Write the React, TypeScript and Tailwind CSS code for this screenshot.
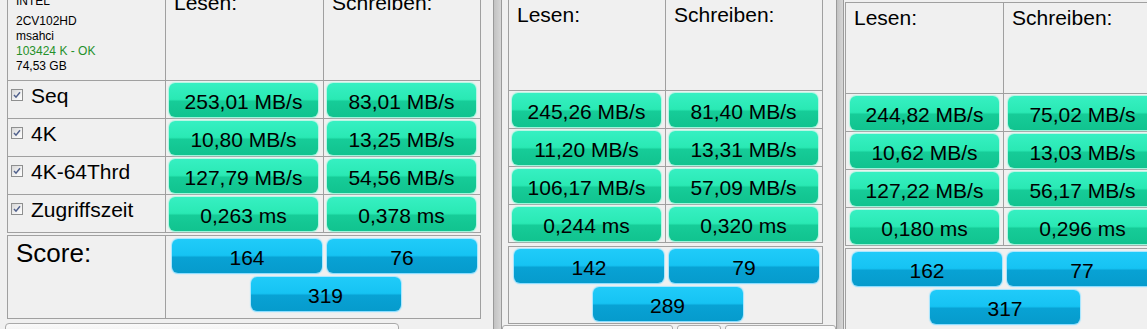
import React from "react";

type PanelDef = {
  reads: string[];
  writes: string[];
  scores: [string, string, string];
};

const LABELS = ["Seq", "4K", "4K-64Thrd", "Zugriffszeit"];

function Check() {
  return (
    <span className="mt-[8px] ml-[3px] w-[12px] h-[12px] shrink-0 border border-[#8e8f8f] bg-[linear-gradient(135deg,#d6d6d6_0%,#f2f2f2_60%,#fdfdfd_100%)] flex items-center justify-center">
      <svg width="8" height="8" viewBox="0 0 8 8">
        <path d="M1 4 L3 6.2 L7 1.2" stroke="#51618c" strokeWidth="1.5" fill="none" />
      </svg>
    </span>
  );
}

function Green({ v, ml }: { v: string; ml: string }) {
  return (
    <div
      className={`${ml} w-[149px] h-[34px] shrink-0 rounded-[6px] bg-[linear-gradient(to_bottom,#36f0c2_0%,#2ae9b4_48%,#16cc98_54%,#11c38f_100%)] shadow-[0_1px_1px_#9cf4da,0_0_1px_1px_#b4f7e4] flex items-center justify-center pt-[4px] text-[21px] leading-[24px] text-black`}
    >
      {v}
    </div>
  );
}

function Blue({ v }: { v: string }) {
  return (
    <div className="w-[150px] h-[34px] shrink-0 rounded-[6px] bg-[linear-gradient(to_bottom,#20cbf9_0%,#16c3f3_48%,#08a2d4_54%,#069bcc_100%)] shadow-[0_1px_1px_#8bdcff,0_0_1px_1px_#a6e6ff] flex items-center justify-center pt-[3px] text-[21px] leading-[24px] text-black">
      {v}
    </div>
  );
}

function App() {
  const p1: PanelDef = {
    reads: ["253,01 MB/s", "10,80 MB/s", "127,79 MB/s", "0,263 ms"],
    writes: ["83,01 MB/s", "13,25 MB/s", "54,56 MB/s", "0,378 ms"],
    scores: ["164", "76", "319"],
  };
  const p2: PanelDef = {
    reads: ["245,26 MB/s", "11,20 MB/s", "106,17 MB/s", "0,244 ms"],
    writes: ["81,40 MB/s", "13,31 MB/s", "57,09 MB/s", "0,320 ms"],
    scores: ["142", "79", "289"],
  };
  const p3: PanelDef = {
    reads: ["244,82 MB/s", "10,62 MB/s", "127,22 MB/s", "0,180 ms"],
    writes: ["75,02 MB/s", "13,03 MB/s", "56,17 MB/s", "0,296 ms"],
    scores: ["162", "77", "317"],
  };

  return (
    <div className="w-[1147px] h-[329px] overflow-hidden bg-[#f0f0f0] flex items-start font-['Liberation_Sans',Arial,sans-serif] text-black">
      {/* Panel 1 */}
      <div className="w-[493px] shrink-0 -mt-[11px] flex flex-col">
        <div className="ml-[7px] w-[474px] border-l border-t border-[#a0a0a0]">
          <div className="flex h-[91px] border-b border-[#a0a0a0]">
            <div className="w-[158px] shrink-0 border-r border-[#a0a0a0] pl-[8px] pt-[4px] text-[12px] leading-[15px]">
              <div>INTEL</div>
              <div className="mt-[5px]">2CV102HD</div>
              <div>msahci</div>
              <div className="text-[#25902a]">103424 K - OK</div>
              <div>74,53 GB</div>
            </div>
            <div className="w-[158px] shrink-0 border-r border-[#a0a0a0] pl-[8px] pt-[1px] text-[21px] leading-[24px]">
              Lesen:
            </div>
            <div className="w-[157px] shrink-0 border-r border-[#a0a0a0] pl-[8px] pt-[1px] text-[21px] leading-[24px]">
              Schreiben:
            </div>
          </div>
          {LABELS.map((l, i) => (
            <div key={l} className="flex h-[38px] border-b border-[#a0a0a0]">
              <div className="w-[158px] shrink-0 border-r border-[#a0a0a0] flex items-start">
                <Check />
                <span className="ml-[8px] pt-[3px] text-[21px] leading-[24px]">{l}</span>
              </div>
              <div className="w-[158px] shrink-0 border-r border-[#a0a0a0] flex items-center">
                <Green v={p1.reads[i]} ml="ml-[3px]" />
              </div>
              <div className="w-[157px] shrink-0 border-r border-[#a0a0a0] flex items-center">
                <Green v={p1.writes[i]} ml="ml-[3px]" />
              </div>
            </div>
          ))}
        </div>
        <div className="ml-[7px] mt-[2px] w-[474px] h-[84px] border-l border-t border-b border-[#a0a0a0] flex">
          <div className="w-[158px] shrink-0 border-r border-[#a0a0a0] pl-[8px] pt-[2px] text-[26px] leading-[30px]">
            Score:
          </div>
          <div className="w-[315px] shrink-0 border-r border-[#a0a0a0] flex flex-col pt-[3px] gap-[4px]">
            <div className="flex pl-[6px] gap-[5px]">
              <Blue v={p1.scores[0]} />
              <Blue v={p1.scores[1]} />
            </div>
            <div className="flex justify-center pl-[5px]">
              <Blue v={p1.scores[2]} />
            </div>
          </div>
        </div>
        <div className="ml-[5px] mt-[4px] w-[394px] h-[20px] rounded-t-[4px] border border-[#a9a9a9] bg-[linear-gradient(to_bottom,#fafafa,#e9e9e9)]" />
      </div>

      {/* Separator 1 */}
      <div className="w-[9px] h-[329px] shrink-0 border-l border-r border-[#9a9a9a] bg-[linear-gradient(to_right,#c2c2c2,#d6d6d6)]" />

      {/* Panel 2 */}
      <div className="w-[334px] shrink-0 -mt-[1px] flex flex-col">
        <div className="ml-[6px] w-[315px] border-l border-t border-[#a0a0a0]">
          <div className="flex h-[91px] border-b border-[#a0a0a0]">
            <div className="w-[157px] shrink-0 border-r border-[#a0a0a0] pl-[8px] pt-[3px] text-[21px] leading-[24px]">
              Lesen:
            </div>
            <div className="w-[157px] shrink-0 border-r border-[#a0a0a0] pl-[8px] pt-[3px] text-[21px] leading-[24px]">
              Schreiben:
            </div>
          </div>
          {LABELS.map((l, i) => (
            <div key={l} className="flex h-[38px] border-b border-[#a0a0a0]">
              <div className="w-[157px] shrink-0 border-r border-[#a0a0a0] flex items-center">
                <Green v={p2.reads[i]} ml="ml-[3px]" />
              </div>
              <div className="w-[157px] shrink-0 border-r border-[#a0a0a0] flex items-center">
                <Green v={p2.writes[i]} ml="ml-[3px]" />
              </div>
            </div>
          ))}
        </div>
        <div className="ml-[6px] mt-[3px] w-[315px] h-[78px] border-l border-t border-b border-[#a0a0a0] flex">
          <div className="w-[314px] shrink-0 border-r border-[#a0a0a0] flex flex-col pt-[2px] gap-[4px]">
            <div className="flex pl-[5px] gap-[5px]">
              <Blue v={p2.scores[0]} />
              <Blue v={p2.scores[1]} />
            </div>
            <div className="flex justify-center pl-[4px]">
              <Blue v={p2.scores[2]} />
            </div>
          </div>
        </div>
        <div className="mt-[1px] flex gap-[4px]">
          <div className="w-[171px] h-[20px] shrink-0 rounded-t-[3px] border border-[#ababab] bg-[linear-gradient(to_bottom,#fbfbfb,#ececec)]" />
          <div className="w-[44px] h-[20px] shrink-0 rounded-t-[3px] border border-[#ababab] bg-[linear-gradient(to_bottom,#fbfbfb,#ececec)]" />
          <div className="w-[111px] h-[20px] shrink-0 rounded-t-[3px] border border-[#ababab] bg-[linear-gradient(to_bottom,#fbfbfb,#ececec)]" />
        </div>
      </div>

      {/* Separator 2 */}
      <div className="w-[8px] h-[329px] shrink-0 border-l border-r border-[#9a9a9a] bg-[linear-gradient(to_right,#c2c2c2,#d6d6d6)]" />

      {/* Panel 3 */}
      <div className="w-[320px] shrink-0 mt-[2px] pl-[1px] flex flex-col">
        <div className="w-[317px] border-l border-t border-[#a0a0a0]">
          <div className="flex h-[91px] border-b border-[#a0a0a0]">
            <div className="w-[158px] shrink-0 border-r border-[#a0a0a0] pl-[8px] pt-[3px] text-[21px] leading-[24px]">
              Lesen:
            </div>
            <div className="w-[158px] shrink-0 border-r border-[#a0a0a0] pl-[8px] pt-[3px] text-[21px] leading-[24px]">
              Schreiben:
            </div>
          </div>
          {LABELS.map((l, i) => (
            <div key={l} className="flex h-[38px] border-b border-[#a0a0a0]">
              <div className="w-[158px] shrink-0 border-r border-[#a0a0a0] flex items-center">
                <Green v={p3.reads[i]} ml="ml-[4px]" />
              </div>
              <div className="w-[158px] shrink-0 border-r border-[#a0a0a0] flex items-center">
                <Green v={p3.writes[i]} ml="ml-[4px]" />
              </div>
            </div>
          ))}
        </div>
        <div className="mt-[2px] w-[317px] h-[84px] border-l border-t border-b border-[#a0a0a0] flex">
          <div className="w-[316px] shrink-0 border-r border-[#a0a0a0] flex flex-col pt-[3px] gap-[4px]">
            <div className="flex pl-[6px] gap-[5px]">
              <Blue v={p3.scores[0]} />
              <Blue v={p3.scores[1]} />
            </div>
            <div className="flex justify-center pl-[3px]">
              <Blue v={p3.scores[2]} />
            </div>
          </div>
        </div>
      </div>
    </div>
  );
}

export default App;
